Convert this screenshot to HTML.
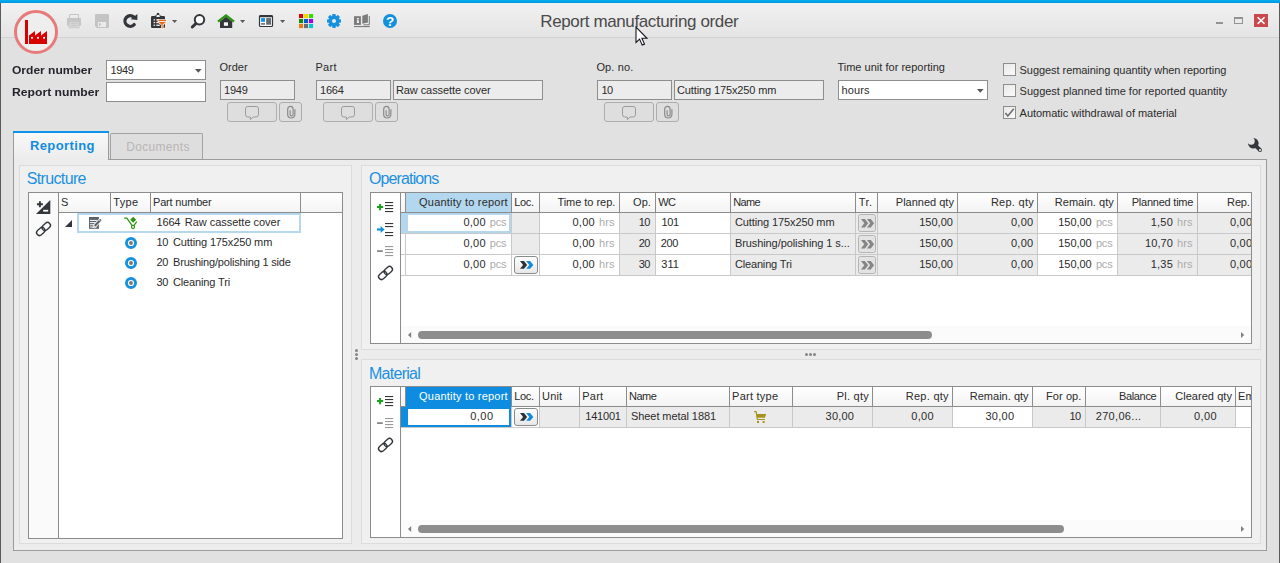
<!DOCTYPE html>
<html lang="en"><head><meta charset="utf-8"><title>Report manufacturing order</title>
<style>
html,body{margin:0;padding:0;}
body{width:1280px;height:563px;overflow:hidden;background:#e1e1e1;position:relative;font-family:"Liberation Sans",sans-serif;font-size:11px;color:#2b2b2b;}
.a{position:absolute;box-sizing:border-box;}
.t{white-space:nowrap;}
svg{overflow:visible;}
</style></head>
<body>
<div class="a " style="left:0px;top:0px;width:1280px;height:3px;background:linear-gradient(#00b0f0,#0095dd);"></div>
<div class="a " style="left:0px;top:3px;width:1280px;height:34px;background:linear-gradient(#f1f1f1,#e4e4e4);"></div>
<div class="a " style="left:0px;top:37px;width:1280px;height:1px;background:#d2d2d2;"></div>
<div class="a " style="left:0px;top:3px;width:1px;height:560px;background:#5a5a5a;"></div>
<div class="a " style="left:1279px;top:3px;width:1px;height:560px;background:#5a5a5a;"></div>
<svg class="a" style="left:13px;top:9px;" width="46" height="46" viewBox="0 0 46 46"><circle cx="23" cy="23" r="20.5" fill="#eeeeee" stroke="#e77b7b" stroke-width="3"/><rect x="12" y="11" width="3" height="24" fill="#d90000"/><path d="M16 35V26.5L22 22v4.5L28 22v4.5L34 22V35z" fill="#d90000"/><rect x="18.1" y="27.9" width="1.8" height="1.8" fill="#fff"/><rect x="24.1" y="27.9" width="1.8" height="1.8" fill="#fff"/><rect x="30.2" y="27.9" width="1.8" height="1.8" fill="#fff"/></svg>
<svg class="a" style="left:0;top:0" width="420" height="40" viewBox="0 0 420 40"><path d="M69.5 18V14.5h9V18" fill="none" stroke="#c6c6c6" stroke-width="1"/><rect x="67" y="18" width="14" height="7.7" rx="0.8" fill="#c6c6c6"/><rect x="69" y="21.8" width="10" height="6.1" fill="#d9d9d9" stroke="#c6c6c6" stroke-width="0.8"/><rect x="70.6" y="23.3" width="6.8" height="0.9" fill="#c2c2c2"/><rect x="70.6" y="25.3" width="6.8" height="0.9" fill="#c2c2c2"/><path d="M96.2 14h11.6a1.2 1.2 0 0 1 1.2 1.2v11.6a1.2 1.2 0 0 1-1.2 1.2H97l-2-2V15.2a1.2 1.2 0 0 1 1.2-1.2z" fill="#c4c4c4"/><rect x="98" y="22" width="8" height="5" fill="#ebebeb"/><rect x="99" y="23.2" width="1.7" height="2.7" fill="#c4c4c4"/><path d="M133.6 16.9A5.3 5.3 0 1 0 134.2 24.6" fill="none" stroke="#33363a" stroke-width="3.3" stroke-linecap="round"/><path d="M137.4 13.9V19.9L130.6 19.3z" fill="#33363a"/><rect x="151" y="16" width="14" height="12" rx="1.2" fill="#33363a"/><path d="M154.8 17v-1.6h1.6L157 13h2l0.6 2.4h1.6V17z" fill="#33363a"/><path d="M156.3 16.9l0.7-2h2.2l0.7 2z" fill="#f2f2f2"/><rect x="153.6" y="19.2" width="1.5" height="1.3" fill="#f2f2f2"/><rect x="156.3" y="19.2" width="3" height="1.3" fill="#f2f2f2"/><rect x="153.6" y="21.9" width="1.5" height="1.3" fill="#f2f2f2"/><rect x="156.3" y="21.9" width="2.2" height="1.3" fill="#f2f2f2"/><rect x="153.6" y="24.6" width="1.5" height="1.3" fill="#f2f2f2"/><rect x="156.3" y="24.6" width="3.5" height="1.3" fill="#f2f2f2"/><path d="M157.6 19.2h9.4v3.2l-3.4 2.6v5l-2.6-1.6v-3.4l-3.4-2.6z" fill="#f2f2f2"/><rect x="158.4" y="19.9" width="7.6" height="1.2" fill="#f26a0e"/><path d="M158.4 22h7.6l-3.3 2.6v4.2l-1.2-1v-3.2z" fill="#f26a0e"/><path d="M172 20h5.2l-2.6 3.1z" fill="#5a5a5a"/><circle cx="199.5" cy="19.7" r="4.7" fill="#fbfbfb" stroke="#33363a" stroke-width="2"/><path d="M195.8 23.6L192.3 27" stroke="#33363a" stroke-width="3" stroke-linecap="round"/><path d="M220 21.4l6-4.6 6.2 4.6V28H220z" fill="#33363a"/><rect x="223.9" y="22.3" width="4.1" height="3.5" fill="#f7f7f7"/><path d="M218 21.6L226 15.4l8 6.2" fill="none" stroke="#2c9412" stroke-width="2.4"/><path d="M240 20h5.2l-2.6 3.1z" fill="#5a5a5a"/><rect x="259.5" y="15.5" width="13" height="11" rx="1" fill="#fafafa" stroke="#33363a" stroke-width="1.2"/><rect x="259.5" y="15.2" width="13" height="2" rx="0.6" fill="#33363a"/><rect x="261.1" y="18.1" width="3.9" height="3.7" fill="#0d92e2"/><rect x="261.1" y="23.1" width="3.9" height="1.6" fill="#666c73"/><rect x="266.2" y="18.1" width="4.8" height="6.6" fill="#666c73"/><path d="M280 20h5.2l-2.6 3.1z" fill="#5a5a5a"/><rect x="299" y="14" width="4.1" height="4.1" fill="#dd0202"/><rect x="304" y="14" width="4.1" height="4.1" fill="#ecd800"/><rect x="309" y="14" width="4.1" height="4.1" fill="#33dd06"/><rect x="299" y="19" width="4.1" height="4.1" fill="#138a08"/><rect x="304" y="19" width="4.1" height="4.1" fill="#0558cd"/><rect x="309" y="19" width="4.1" height="4.1" fill="#9b04ef"/><rect x="299" y="24" width="4.1" height="4.1" fill="#ee7a12"/><rect x="304" y="24" width="4.1" height="4.1" fill="#676d73"/><rect x="309" y="24" width="4.1" height="4.1" fill="#04c6cf"/><rect x="-1.75" y="-7" width="3.5" height="3.6" rx="0.7" transform="translate(334 21) rotate(0)" fill="#1691df"/><rect x="-1.75" y="-7" width="3.5" height="3.6" rx="0.7" transform="translate(334 21) rotate(45)" fill="#1691df"/><rect x="-1.75" y="-7" width="3.5" height="3.6" rx="0.7" transform="translate(334 21) rotate(90)" fill="#1691df"/><rect x="-1.75" y="-7" width="3.5" height="3.6" rx="0.7" transform="translate(334 21) rotate(135)" fill="#1691df"/><rect x="-1.75" y="-7" width="3.5" height="3.6" rx="0.7" transform="translate(334 21) rotate(180)" fill="#1691df"/><rect x="-1.75" y="-7" width="3.5" height="3.6" rx="0.7" transform="translate(334 21) rotate(225)" fill="#1691df"/><rect x="-1.75" y="-7" width="3.5" height="3.6" rx="0.7" transform="translate(334 21) rotate(270)" fill="#1691df"/><rect x="-1.75" y="-7" width="3.5" height="3.6" rx="0.7" transform="translate(334 21) rotate(315)" fill="#1691df"/><circle cx="334" cy="21" r="3.7" fill="none" stroke="#1691df" stroke-width="3.3"/><rect x="354" y="16.2" width="6.9" height="8.7" fill="#7b7b7b"/><rect x="356.9" y="18" width="2" height="1.5" fill="#efefef"/><rect x="356.9" y="20.2" width="2" height="2.8" fill="#efefef"/><path d="M362.3 15.8L367.9 14v8.5l-5.6 1.2z" fill="#7b7b7b"/><path d="M369.3 16v8.8H363.5" fill="none" stroke="#7b7b7b" stroke-width="1"/><rect x="354" y="26" width="15.8" height="1.1" fill="#7b7b7b"/><circle cx="390" cy="21" r="7" fill="#1290dc"/><text x="390" y="25.9" text-anchor="middle" font-family="Liberation Sans,sans-serif" font-weight="bold" font-size="13.5" fill="#fff">?</text></svg>
<span id="t1" class="a t" style="top:11px;font-size:17px;line-height:21px;color:#4a4a4a;letter-spacing:-0.381px;left:639.31px;transform:translateX(-50%);">Report manufacturing order</span>
<svg class="a" style="left:635px;top:26px;" width="13" height="20" viewBox="0 0 13 20"><path d="M1 1v15.5l3.6-3.4 2.6 6 2.3-1-2.6-5.8H12z" fill="#fff" stroke="#15151f" stroke-width="1.1"/></svg>
<div class="a " style="left:1216px;top:22px;width:7px;height:2px;background:#939393;"></div>
<div class="a " style="left:1234px;top:17px;width:9px;height:7px;border:1px solid #939393;border-top-width:2px;"></div>
<div class="a " style="left:1254px;top:14px;width:14px;height:13px;background:#c9484b;"></div>
<svg class="a" style="left:1254px;top:14px;" width="14" height="13" viewBox="0 0 14 13"><path d="M3.6 3.3L10.6 9.9M10.6 3.3L3.6 9.9" stroke="#fff" stroke-width="1.5"/></svg>
<span id="t2" class="a t" style="top:63px;font-size:11px;line-height:14px;color:#25252d;font-weight:bold;left:12.39px;transform:scaleX(1.0934);transform-origin:0 0;">Order number</span>
<span id="t3" class="a t" style="top:85px;font-size:11px;line-height:14px;color:#25252d;font-weight:bold;left:12.39px;transform:scaleX(1.1062);transform-origin:0 0;">Report number</span>
<div class="a " style="left:106px;top:60px;width:100px;height:20px;background:#fff;border:1px solid #8e8e8e;"></div>
<svg class="a" style="left:195.1px;top:68.6px;" width="7" height="4" viewBox="0 0 7 4"><path d="M0 0h6.6L3.3 3.7z" fill="#555"/></svg>
<span id="t4" class="a t" style="top:63px;font-size:11px;line-height:14px;color:#2b2b2b;letter-spacing:-0.323px;left:110.39px;">1949</span>
<div class="a " style="left:106px;top:82px;width:100px;height:20px;background:#fff;border:1px solid #8e8e8e;"></div>
<span id="t5" class="a t" style="top:60px;font-size:11px;line-height:14px;color:#2b2b2b;letter-spacing:0.022px;left:219.40px;">Order</span>
<div class="a " style="left:220px;top:80px;width:75px;height:20px;background:#ececec;border:1px solid #8e8e8e;"></div>
<span id="t6" class="a t" style="top:83px;font-size:11px;line-height:14px;color:#2b2b2b;letter-spacing:-0.190px;left:224.00px;">1949</span>
<div class="a " style="left:227px;top:102px;width:50px;height:20px;background:#dedede;border:1px solid #adadad;border-radius:3px;"></div>
<svg class="a" style="left:245px;top:106px;" width="14" height="14" viewBox="0 0 14 14"><path d="M2.8 0.5h8.4a2.3 2.3 0 0 1 2.3 2.3v5.9a2.3 2.3 0 0 1-2.3 2.3H8.2L5.4 13.6 5.2 11H2.8a2.3 2.3 0 0 1-2.3-2.3V2.8a2.3 2.3 0 0 1 2.3-2.3z" fill="none" stroke="#9b9b9b" stroke-width="1"/></svg>
<div class="a " style="left:279px;top:102px;width:23px;height:20px;background:#dedede;border:1px solid #adadad;border-radius:3px;"></div>
<svg class="a" style="left:286.7px;top:106px;" width="9" height="13" viewBox="0 0 9 13"><path d="M7.9 3.2V8.6A3.6 3.4 0 0 1 0.7 8.6V3.3A2.7 2.9 0 0 1 6.1 3.3V8.4A1.5 1.5 0 0 1 3.1 8.4V4.2" fill="none" stroke="#888" stroke-width="1.15"/></svg>
<span id="t7" class="a t" style="top:60px;font-size:11px;line-height:14px;color:#2b2b2b;letter-spacing:0.340px;left:315.39px;">Part</span>
<div class="a " style="left:316px;top:80px;width:75px;height:20px;background:#ececec;border:1px solid #8e8e8e;"></div>
<span id="t8" class="a t" style="top:83px;font-size:11px;line-height:14px;color:#2b2b2b;letter-spacing:-0.190px;left:320.00px;">1664</span>
<div class="a " style="left:393px;top:80px;width:150px;height:20px;background:#ececec;border:1px solid #8e8e8e;"></div>
<span id="t9" class="a t" style="top:83px;font-size:11px;line-height:14px;color:#2b2b2b;letter-spacing:-0.069px;left:395.89px;">Raw cassette cover</span>
<div class="a " style="left:323px;top:102px;width:50px;height:20px;background:#dedede;border:1px solid #adadad;border-radius:3px;"></div>
<svg class="a" style="left:341px;top:106px;" width="14" height="14" viewBox="0 0 14 14"><path d="M2.8 0.5h8.4a2.3 2.3 0 0 1 2.3 2.3v5.9a2.3 2.3 0 0 1-2.3 2.3H8.2L5.4 13.6 5.2 11H2.8a2.3 2.3 0 0 1-2.3-2.3V2.8a2.3 2.3 0 0 1 2.3-2.3z" fill="none" stroke="#9b9b9b" stroke-width="1"/></svg>
<div class="a " style="left:375px;top:102px;width:23px;height:20px;background:#dedede;border:1px solid #adadad;border-radius:3px;"></div>
<svg class="a" style="left:382.7px;top:106px;" width="9" height="13" viewBox="0 0 9 13"><path d="M7.9 3.2V8.6A3.6 3.4 0 0 1 0.7 8.6V3.3A2.7 2.9 0 0 1 6.1 3.3V8.4A1.5 1.5 0 0 1 3.1 8.4V4.2" fill="none" stroke="#888" stroke-width="1.15"/></svg>
<span id="t10" class="a t" style="top:60px;font-size:11px;line-height:14px;color:#2b2b2b;letter-spacing:0.122px;left:596.39px;">Op. no.</span>
<div class="a " style="left:597px;top:80px;width:75px;height:20px;background:#ececec;border:1px solid #8e8e8e;"></div>
<span id="t11" class="a t" style="top:83px;font-size:11px;line-height:14px;color:#2b2b2b;letter-spacing:-0.530px;left:601.39px;">10</span>
<div class="a " style="left:674px;top:80px;width:150px;height:20px;background:#ececec;border:1px solid #8e8e8e;"></div>
<span id="t12" class="a t" style="top:83px;font-size:11px;line-height:14px;color:#2b2b2b;letter-spacing:-0.118px;left:677.00px;">Cutting 175x250 mm</span>
<div class="a " style="left:604px;top:102px;width:50px;height:20px;background:#dedede;border:1px solid #adadad;border-radius:3px;"></div>
<svg class="a" style="left:622px;top:106px;" width="14" height="14" viewBox="0 0 14 14"><path d="M2.8 0.5h8.4a2.3 2.3 0 0 1 2.3 2.3v5.9a2.3 2.3 0 0 1-2.3 2.3H8.2L5.4 13.6 5.2 11H2.8a2.3 2.3 0 0 1-2.3-2.3V2.8a2.3 2.3 0 0 1 2.3-2.3z" fill="none" stroke="#9b9b9b" stroke-width="1"/></svg>
<div class="a " style="left:656px;top:102px;width:23px;height:20px;background:#dedede;border:1px solid #adadad;border-radius:3px;"></div>
<svg class="a" style="left:663.7px;top:106px;" width="9" height="13" viewBox="0 0 9 13"><path d="M7.9 3.2V8.6A3.6 3.4 0 0 1 0.7 8.6V3.3A2.7 2.9 0 0 1 6.1 3.3V8.4A1.5 1.5 0 0 1 3.1 8.4V4.2" fill="none" stroke="#888" stroke-width="1.15"/></svg>
<span id="t13" class="a t" style="top:60px;font-size:11px;line-height:14px;color:#2b2b2b;letter-spacing:0.019px;left:837.39px;">Time unit for reporting</span>
<div class="a " style="left:838px;top:80px;width:150px;height:20px;background:#fff;border:1px solid #8e8e8e;"></div>
<svg class="a" style="left:977.1px;top:88.6px;" width="7" height="4" viewBox="0 0 7 4"><path d="M0 0h6.6L3.3 3.7z" fill="#555"/></svg>
<span id="t14" class="a t" style="top:83px;font-size:11px;line-height:14px;color:#2b2b2b;letter-spacing:0.173px;left:841.39px;">hours</span>
<div class="a " style="left:1003px;top:63px;width:13px;height:13px;background:linear-gradient(135deg,#e9e9e9,#fafafa);border:1px solid #8e8e8e;"></div>
<span id="t15" class="a t" style="top:63px;font-size:11px;line-height:14px;color:#2b2b2b;letter-spacing:-0.060px;left:1019.60px;">Suggest remaining quantity when reporting</span>
<div class="a " style="left:1003px;top:84px;width:13px;height:13px;background:linear-gradient(135deg,#e9e9e9,#fafafa);border:1px solid #8e8e8e;"></div>
<span id="t16" class="a t" style="top:84px;font-size:11px;line-height:14px;color:#2b2b2b;letter-spacing:-0.010px;left:1019.60px;">Suggest planned time for reported quantity</span>
<div class="a " style="left:1003px;top:106px;width:13px;height:13px;background:linear-gradient(135deg,#e9e9e9,#fafafa);border:1px solid #8e8e8e;"></div>
<svg class="a" style="left:1003px;top:106px;" width="13" height="13" viewBox="0 0 13 13"><path d="M2.4 7L4.8 10L10.8 2.8" fill="none" stroke="#6e6e6e" stroke-width="1.6"/></svg>
<span id="t17" class="a t" style="top:106px;font-size:11px;line-height:14px;color:#2b2b2b;letter-spacing:-0.036px;left:1019.60px;">Automatic withdrawal of material</span>
<svg class="a" style="left:1240px;top:130px" width="30" height="30" viewBox="1240 130 30 30"><defs><mask id="wm"><rect x="1240" y="130" width="30" height="30" fill="#fff"/><circle cx="1251.15" cy="141.15" r="3.55" fill="#000"/></mask></defs><g mask="url(#wm)"><circle cx="1253.3" cy="143.3" r="5.3" fill="#33363a"/></g><path d="M1255.4 145.4L1260.1 150.1" stroke="#33363a" stroke-width="3.7"/><circle cx="1260.1" cy="150.1" r="1.85" fill="#33363a"/><circle cx="1260" cy="150" r="1" fill="#fff"/></svg>
<div class="a " style="left:13px;top:159px;width:1254px;height:392px;background:#ececec;border:1px solid #9c9c9c;"></div>
<div class="a " style="left:13px;top:131px;width:96px;height:29px;background:linear-gradient(#f9f9f9,#ececec);border:1px solid #9a9a9a;border-bottom:none;border-top:none;"></div>
<div class="a " style="left:13px;top:131px;width:96px;height:2px;background:#0f93e6;"></div>
<span id="t18" class="a t" style="top:138px;font-size:13px;line-height:16px;color:#128ce0;font-weight:bold;letter-spacing:0.380px;left:62.39px;transform:translateX(-50%);">Reporting</span>
<div class="a " style="left:110px;top:133px;width:93px;height:26px;background:#dedede;border:1px solid #a2a2a2;border-bottom:none;border-radius:2px 2px 0 0;"></div>
<span id="t19" class="a t" style="top:140px;font-size:12px;line-height:15px;color:#b9b5b5;letter-spacing:0.327px;left:157.96px;transform:translateX(-50%);">Documents</span>
<div class="a " style="left:19px;top:165px;width:333px;height:379px;background:#f0f0f0;border:1px solid #dcdcdc;"></div>
<span id="t20" class="a t" style="top:169px;font-size:16px;line-height:20px;color:#1b90e2;letter-spacing:-0.644px;left:26.72px;">Structure</span>
<div class="a " style="left:361px;top:165px;width:900px;height:185px;background:#f0f0f0;border:1px solid #dcdcdc;"></div>
<span id="t21" class="a t" style="top:169px;font-size:16px;line-height:20px;color:#1b90e2;letter-spacing:-0.879px;left:369.02px;">Operations</span>
<div class="a " style="left:361px;top:359px;width:900px;height:185px;background:#f0f0f0;border:1px solid #dcdcdc;"></div>
<span id="t22" class="a t" style="top:364px;font-size:16px;line-height:20px;color:#1b90e2;letter-spacing:-0.736px;left:369.02px;">Material</span>
<div class="a " style="left:355px;top:349px;width:3px;height:3px;background:#858585;border-radius:1.5px;"></div>
<div class="a " style="left:805px;top:353px;width:3px;height:3px;background:#858585;border-radius:1.5px;"></div>
<div class="a " style="left:355px;top:353px;width:3px;height:3px;background:#858585;border-radius:1.5px;"></div>
<div class="a " style="left:809px;top:353px;width:3px;height:3px;background:#858585;border-radius:1.5px;"></div>
<div class="a " style="left:355px;top:357px;width:3px;height:3px;background:#858585;border-radius:1.5px;"></div>
<div class="a " style="left:813px;top:353px;width:3px;height:3px;background:#858585;border-radius:1.5px;"></div>
<div class="a " style="left:28px;top:192px;width:315px;height:347px;background:#fff;border:1px solid #8c8c8c;"></div>
<div class="a " style="left:29px;top:193px;width:29px;height:345px;background:#fafafa;"></div>
<div class="a " style="left:58px;top:193px;width:1px;height:345px;background:#8c8c8c;"></div>
<div class="a " style="left:59px;top:193px;width:283px;height:19px;background:linear-gradient(#ffffff,#f4f4f4);"></div>
<div class="a " style="left:59px;top:212px;width:283px;height:1px;background:#8c8c8c;"></div>
<div class="a " style="left:110px;top:193px;width:1px;height:19px;background:#8c8c8c;"></div>
<div class="a " style="left:150px;top:193px;width:1px;height:19px;background:#8c8c8c;"></div>
<div class="a " style="left:300px;top:193px;width:1px;height:19px;background:#8c8c8c;"></div>
<span id="t23" class="a t" style="top:195px;font-size:11px;line-height:14px;color:#2b2b2b;left:61.10px;">S</span>
<span id="t24" class="a t" style="top:195px;font-size:11px;line-height:14px;color:#2b2b2b;letter-spacing:0.287px;left:113.30px;">Type</span>
<span id="t25" class="a t" style="top:195px;font-size:11px;line-height:14px;color:#2b2b2b;letter-spacing:-0.182px;left:153.00px;">Part number</span>
<div class="a " style="left:77px;top:213px;width:224px;height:20px;background:#fff;border:2px solid #b5d8ef;"></div>
<svg class="a" style="left:65px;top:220px;" width="7" height="7" viewBox="0 0 7 7"><path d="M7 0V7H0z" fill="#33363a"/></svg>
<svg class="a" style="left:89px;top:217px;" width="13" height="12" viewBox="0 0 13 12"><rect x="0" y="0" width="9.9" height="11.8" fill="#5a6068"/><path d="M0.9 3.4h7M0.9 5.6h5.6M0.9 7.8h4M0.9 10h3.2" stroke="#fff" stroke-width="1"/><path d="M3.6 10.4q2.2 0.9 4.6-0.9" fill="none" stroke="#fff" stroke-width="0.9"/><path d="M11.3 3.1L5.2 9.3" stroke="#fff" stroke-width="3.7"/><path d="M11.9 2.5L5.6 8.9" stroke="#5a6068" stroke-width="2.1"/><path d="M4.1 10.3l0.6-2.2 1.6 1.5z" fill="#fff"/><circle cx="10.9" cy="3.5" r="0.55" fill="#fff"/></svg>
<svg class="a" style="left:124px;top:217px;" width="14" height="12" viewBox="0 0 14 12"><path d="M0.2 1.2h2.6L9 9.6" fill="none" stroke="#2c9412" stroke-width="1.3"/><path d="M12.8 4.6L9 9.6" fill="none" stroke="#2c9412" stroke-width="1.3"/><path d="M9.2 -0.3l3 3-3 3-3-3z" fill="#2c9412"/><circle cx="9" cy="10" r="1.55" fill="#fff" stroke="#2c9412" stroke-width="1.2"/></svg>
<svg class="a" style="left:125px;top:237px;" width="12" height="12" viewBox="0 0 12 12"><circle cx="6" cy="6" r="4.55" fill="#fff" stroke="#1691df" stroke-width="2.9"/><circle cx="6" cy="6" r="1.9" fill="#70757a"/></svg>
<svg class="a" style="left:125px;top:257px;" width="12" height="12" viewBox="0 0 12 12"><circle cx="6" cy="6" r="4.55" fill="#fff" stroke="#1691df" stroke-width="2.9"/><circle cx="6" cy="6" r="1.9" fill="#70757a"/></svg>
<svg class="a" style="left:125px;top:277px;" width="12" height="12" viewBox="0 0 12 12"><circle cx="6" cy="6" r="4.55" fill="#fff" stroke="#1691df" stroke-width="2.9"/><circle cx="6" cy="6" r="1.9" fill="#70757a"/></svg>
<span id="t26" class="a t" style="top:215px;font-size:11px;line-height:14px;color:#2b2b2b;letter-spacing:-0.190px;left:156.59px;">1664</span>
<span id="t27" class="a t" style="top:215px;font-size:11px;line-height:14px;color:#2b2b2b;letter-spacing:-0.028px;left:184.80px;">Raw cassette cover</span>
<span id="t28" class="a t" style="top:235px;font-size:11px;line-height:14px;color:#2b2b2b;letter-spacing:-0.530px;left:156.59px;">10</span>
<span id="t29" class="a t" style="top:235px;font-size:11px;line-height:14px;color:#2b2b2b;letter-spacing:-0.129px;left:173.00px;">Cutting 175x250 mm</span>
<span id="t30" class="a t" style="top:255px;font-size:11px;line-height:14px;color:#2b2b2b;letter-spacing:-0.530px;left:156.59px;">20</span>
<span id="t31" class="a t" style="top:255px;font-size:11px;line-height:14px;color:#2b2b2b;letter-spacing:-0.183px;left:173.00px;">Brushing/polishing 1 side</span>
<span id="t32" class="a t" style="top:275px;font-size:11px;line-height:14px;color:#2b2b2b;letter-spacing:-0.530px;left:156.59px;">30</span>
<span id="t33" class="a t" style="top:275px;font-size:11px;line-height:14px;color:#2b2b2b;letter-spacing:-0.145px;left:173.00px;">Cleaning Tri</span>
<svg class="a" style="left:36px;top:200px;" width="15" height="14" viewBox="0 0 15 14"><path d="M14.3 0V13.9H0z" fill="#33363a"/><rect x="7.2" y="9.8" width="5" height="1.8" fill="#fff"/><path d="M0.9 4.2h6M3.9 1.2v6" stroke="#33363a" stroke-width="1.9"/></svg>
<svg class="a" style="left:35.5px;top:222px;" width="15" height="14" viewBox="0 0 15 14"><g fill="none" stroke="#33363a" stroke-width="1.35" transform="rotate(-42 7.5 7)"><rect x="-0.8" y="4.1" width="9.2" height="5.8" rx="2.9"/><rect x="6.6" y="4.1" width="9.2" height="5.8" rx="2.9"/></g></svg>
<div class="a " style="left:370px;top:192px;width:882px;height:152px;background:#fff;border:1px solid #8c8c8c;"></div>
<div class="a " style="left:400px;top:193px;width:1px;height:150px;background:#8c8c8c;"></div>
<div class="a " style="left:401px;top:193px;width:850px;height:19px;background:linear-gradient(#ffffff,#f3f3f3);"></div>
<div class="a " style="left:401px;top:212px;width:850px;height:1px;background:#8c8c8c;"></div>
<div class="a " style="left:405px;top:193px;width:1px;height:19px;background:#8c8c8c;"></div>
<div class="a " style="left:401px;top:326px;width:850px;height:17px;background:#fbfbfb;"></div>
<div class="a " style="left:418px;top:331px;width:514px;height:8px;background:#8d8d8d;border-radius:4px;"></div>
<svg class="a" style="left:408px;top:332px;" width="3" height="6" viewBox="0 0 3 6"><path d="M3.2 0V6L0 3z" fill="#808080"/></svg>
<svg class="a" style="left:1241px;top:332px;" width="3" height="6" viewBox="0 0 3 6"><path d="M0 0V6L3.2 3z" fill="#808080"/></svg>
<div class="a " style="left:406px;top:193px;width:105px;height:19px;background:#b3d7ee;"></div>
<div class="a " style="left:511px;top:193px;width:1px;height:19px;background:#8c8c8c;"></div>
<span id="t34" class="a t" style="top:195px;font-size:11px;line-height:14px;color:#2b2b2b;letter-spacing:0.206px;right:772.19px;">Quantity to report</span>
<div class="a " style="left:539px;top:193px;width:1px;height:19px;background:#8c8c8c;"></div>
<span id="t35" class="a t" style="top:195px;font-size:11px;line-height:14px;color:#2b2b2b;letter-spacing:-0.297px;left:514.19px;">Loc.</span>
<div class="a " style="left:619px;top:193px;width:1px;height:19px;background:#8c8c8c;"></div>
<span id="t36" class="a t" style="top:195px;font-size:11px;line-height:14px;color:#2b2b2b;letter-spacing:-0.034px;right:664.73px;">Time to rep.</span>
<div class="a " style="left:655px;top:193px;width:1px;height:19px;background:#8c8c8c;"></div>
<span id="t37" class="a t" style="top:195px;font-size:11px;line-height:14px;color:#2b2b2b;letter-spacing:0.090px;right:629.00px;">Op.</span>
<div class="a " style="left:730px;top:193px;width:1px;height:19px;background:#8c8c8c;"></div>
<span id="t38" class="a t" style="top:195px;font-size:11px;line-height:14px;color:#2b2b2b;letter-spacing:-0.600px;left:658.29px;">WC</span>
<div class="a " style="left:855px;top:193px;width:1px;height:19px;background:#8c8c8c;"></div>
<span id="t39" class="a t" style="top:195px;font-size:11px;line-height:14px;color:#2b2b2b;letter-spacing:-0.600px;left:733.19px;">Name</span>
<div class="a " style="left:877px;top:193px;width:1px;height:19px;background:#8c8c8c;"></div>
<span id="t40" class="a t" style="top:195px;font-size:11px;line-height:14px;color:#2b2b2b;letter-spacing:0.485px;left:858.79px;">Tr.</span>
<div class="a " style="left:957px;top:193px;width:1px;height:19px;background:#8c8c8c;"></div>
<span id="t41" class="a t" style="top:195px;font-size:11px;line-height:14px;color:#2b2b2b;right:326.10px;">Planned qty</span>
<div class="a " style="left:1037px;top:193px;width:1px;height:19px;background:#8c8c8c;"></div>
<span id="t42" class="a t" style="top:195px;font-size:11px;line-height:14px;color:#2b2b2b;letter-spacing:0.263px;right:246.03px;">Rep. qty</span>
<div class="a " style="left:1117px;top:193px;width:1px;height:19px;background:#8c8c8c;"></div>
<span id="t43" class="a t" style="top:195px;font-size:11px;line-height:14px;color:#2b2b2b;letter-spacing:0.022px;right:166.27px;">Remain. qty</span>
<div class="a " style="left:1197px;top:193px;width:1px;height:19px;background:#8c8c8c;"></div>
<span id="t44" class="a t" style="top:195px;font-size:11px;line-height:14px;color:#2b2b2b;letter-spacing:-0.228px;right:86.82px;">Planned time</span>
<span id="t45" class="a t" style="top:195px;font-size:11px;line-height:14px;color:#2b2b2b;letter-spacing:-0.143px;right:30.24px;">Rep.</span>
<div class="a " style="left:512px;top:213px;width:27px;height:20px;background:#ebebeb;"></div>
<div class="a " style="left:620px;top:213px;width:35px;height:20px;background:#ebebeb;"></div>
<div class="a " style="left:731px;top:213px;width:124px;height:20px;background:#ebebeb;"></div>
<div class="a " style="left:856px;top:213px;width:21px;height:20px;background:#ebebeb;"></div>
<div class="a " style="left:878px;top:213px;width:79px;height:20px;background:#ebebeb;"></div>
<div class="a " style="left:958px;top:213px;width:79px;height:20px;background:#ebebeb;"></div>
<div class="a " style="left:1118px;top:213px;width:79px;height:20px;background:#ebebeb;"></div>
<div class="a " style="left:1198px;top:213px;width:53px;height:20px;background:#ebebeb;"></div>
<div class="a " style="left:401px;top:233px;width:850px;height:1px;background:#c9c9c9;"></div>
<div class="a " style="left:511px;top:213px;width:1px;height:20px;background:#c9c9c9;"></div>
<div class="a " style="left:539px;top:213px;width:1px;height:20px;background:#c9c9c9;"></div>
<div class="a " style="left:619px;top:213px;width:1px;height:20px;background:#c9c9c9;"></div>
<div class="a " style="left:655px;top:213px;width:1px;height:20px;background:#c9c9c9;"></div>
<div class="a " style="left:730px;top:213px;width:1px;height:20px;background:#c9c9c9;"></div>
<div class="a " style="left:855px;top:213px;width:1px;height:20px;background:#c9c9c9;"></div>
<div class="a " style="left:877px;top:213px;width:1px;height:20px;background:#c9c9c9;"></div>
<div class="a " style="left:957px;top:213px;width:1px;height:20px;background:#c9c9c9;"></div>
<div class="a " style="left:1037px;top:213px;width:1px;height:20px;background:#c9c9c9;"></div>
<div class="a " style="left:1117px;top:213px;width:1px;height:20px;background:#c9c9c9;"></div>
<div class="a " style="left:1197px;top:213px;width:1px;height:20px;background:#c9c9c9;"></div>
<div class="a " style="left:405px;top:213px;width:1px;height:20px;background:#c9c9c9;"></div>
<div class="a " style="left:401px;top:213px;width:5px;height:20px;background:#b3d7ee;"></div>
<div class="a " style="left:406px;top:213px;width:105px;height:20px;background:#fff;border:2px solid #b3d7ee;"></div>
<span id="t46" class="a t" style="top:215px;font-size:11px;line-height:14px;color:#2b2b2b;letter-spacing:0.230px;right:794.26px;">0,00</span>
<span id="t47" class="a t" style="top:215px;font-size:11px;line-height:14px;color:#ababab;letter-spacing:-0.155px;left:489.79px;">pcs</span>
<span id="t48" class="a t" style="top:215px;font-size:11px;line-height:14px;color:#2b2b2b;letter-spacing:0.230px;right:685.16px;">0,00</span>
<span id="t49" class="a t" style="top:215px;font-size:11px;line-height:14px;color:#ababab;letter-spacing:0.160px;left:598.89px;">hrs</span>
<span id="t50" class="a t" style="top:215px;font-size:11px;line-height:14px;color:#2b2b2b;letter-spacing:-0.600px;right:630.20px;">10</span>
<span id="t51" class="a t" style="top:215px;font-size:11px;line-height:14px;color:#2b2b2b;letter-spacing:-0.330px;left:661.39px;">101</span>
<span id="t52" class="a t" style="top:215px;font-size:11px;line-height:14px;color:#2b2b2b;letter-spacing:-0.105px;left:734.89px;">Cutting 175x250 mm</span>
<span id="t53" class="a t" style="top:215px;font-size:11px;line-height:14px;color:#2b2b2b;letter-spacing:0.010px;right:327.09px;">150,00</span>
<span id="t54" class="a t" style="top:215px;font-size:11px;line-height:14px;color:#2b2b2b;letter-spacing:0.230px;right:246.66px;">0,00</span>
<span id="t55" class="a t" style="top:215px;font-size:11px;line-height:14px;color:#2b2b2b;letter-spacing:-0.068px;right:188.46px;">150,00</span>
<span id="t56" class="a t" style="top:215px;font-size:11px;line-height:14px;color:#ababab;letter-spacing:-0.155px;left:1095.89px;">pcs</span>
<span id="t57" class="a t" style="top:215px;font-size:11px;line-height:14px;color:#2b2b2b;letter-spacing:0.230px;right:106.96px;">1,50</span>
<span id="t58" class="a t" style="top:215px;font-size:11px;line-height:14px;color:#ababab;letter-spacing:0.160px;left:1176.89px;">hrs</span>
<div class="a" style="left:1198px;top:213px;width:53px;height:20px;overflow:hidden">
<span id="t59" class="a t" style="top:2px;font-size:11px;line-height:14px;color:#2b2b2b;letter-spacing:0.230px;left:31.99px;">0,00</span>
</div>
<div class="a " style="left:858px;top:214px;width:18px;height:18px;background:#e3e3e3;border:1px solid #b4b4b4;border-radius:2.5px;"></div>
<svg class="a" style="left:860.8px;top:219px;" width="13.2" height="8.4" viewBox="0 0 13.2 8.4"><path d="M0 0h3.9l3.3 4.2-3.3 4.2H0l3.3-4.2z" fill="#868686"/><path d="M5.9 0h3.9l3.3 4.2-3.3 4.2H5.9l3.3-4.2z" fill="#868686"/></svg>
<div class="a " style="left:512px;top:234px;width:27px;height:20px;background:#ebebeb;"></div>
<div class="a " style="left:620px;top:234px;width:35px;height:20px;background:#ebebeb;"></div>
<div class="a " style="left:731px;top:234px;width:124px;height:20px;background:#ebebeb;"></div>
<div class="a " style="left:856px;top:234px;width:21px;height:20px;background:#ebebeb;"></div>
<div class="a " style="left:878px;top:234px;width:79px;height:20px;background:#ebebeb;"></div>
<div class="a " style="left:958px;top:234px;width:79px;height:20px;background:#ebebeb;"></div>
<div class="a " style="left:1118px;top:234px;width:79px;height:20px;background:#ebebeb;"></div>
<div class="a " style="left:1198px;top:234px;width:53px;height:20px;background:#ebebeb;"></div>
<div class="a " style="left:401px;top:254px;width:850px;height:1px;background:#c9c9c9;"></div>
<div class="a " style="left:511px;top:234px;width:1px;height:20px;background:#c9c9c9;"></div>
<div class="a " style="left:539px;top:234px;width:1px;height:20px;background:#c9c9c9;"></div>
<div class="a " style="left:619px;top:234px;width:1px;height:20px;background:#c9c9c9;"></div>
<div class="a " style="left:655px;top:234px;width:1px;height:20px;background:#c9c9c9;"></div>
<div class="a " style="left:730px;top:234px;width:1px;height:20px;background:#c9c9c9;"></div>
<div class="a " style="left:855px;top:234px;width:1px;height:20px;background:#c9c9c9;"></div>
<div class="a " style="left:877px;top:234px;width:1px;height:20px;background:#c9c9c9;"></div>
<div class="a " style="left:957px;top:234px;width:1px;height:20px;background:#c9c9c9;"></div>
<div class="a " style="left:1037px;top:234px;width:1px;height:20px;background:#c9c9c9;"></div>
<div class="a " style="left:1117px;top:234px;width:1px;height:20px;background:#c9c9c9;"></div>
<div class="a " style="left:1197px;top:234px;width:1px;height:20px;background:#c9c9c9;"></div>
<div class="a " style="left:405px;top:234px;width:1px;height:20px;background:#c9c9c9;"></div>
<span id="t60" class="a t" style="top:236px;font-size:11px;line-height:14px;color:#2b2b2b;letter-spacing:0.230px;right:794.26px;">0,00</span>
<span id="t61" class="a t" style="top:236px;font-size:11px;line-height:14px;color:#ababab;letter-spacing:-0.155px;left:489.79px;">pcs</span>
<span id="t62" class="a t" style="top:236px;font-size:11px;line-height:14px;color:#2b2b2b;letter-spacing:0.230px;right:685.16px;">0,00</span>
<span id="t63" class="a t" style="top:236px;font-size:11px;line-height:14px;color:#ababab;letter-spacing:0.160px;left:598.89px;">hrs</span>
<span id="t64" class="a t" style="top:236px;font-size:11px;line-height:14px;color:#2b2b2b;letter-spacing:-0.600px;right:630.20px;">20</span>
<span id="t65" class="a t" style="top:236px;font-size:11px;line-height:14px;color:#2b2b2b;letter-spacing:-0.330px;left:660.69px;">200</span>
<span id="t66" class="a t" style="top:236px;font-size:11px;line-height:14px;color:#2b2b2b;letter-spacing:-0.079px;left:734.89px;">Brushing/polishing 1 s...</span>
<span id="t67" class="a t" style="top:236px;font-size:11px;line-height:14px;color:#2b2b2b;letter-spacing:0.010px;right:327.09px;">150,00</span>
<span id="t68" class="a t" style="top:236px;font-size:11px;line-height:14px;color:#2b2b2b;letter-spacing:0.230px;right:246.66px;">0,00</span>
<span id="t69" class="a t" style="top:236px;font-size:11px;line-height:14px;color:#2b2b2b;letter-spacing:-0.068px;right:188.46px;">150,00</span>
<span id="t70" class="a t" style="top:236px;font-size:11px;line-height:14px;color:#ababab;letter-spacing:-0.155px;left:1095.89px;">pcs</span>
<span id="t71" class="a t" style="top:236px;font-size:11px;line-height:14px;color:#2b2b2b;letter-spacing:0.043px;right:107.15px;">10,70</span>
<span id="t72" class="a t" style="top:236px;font-size:11px;line-height:14px;color:#ababab;letter-spacing:0.160px;left:1176.89px;">hrs</span>
<div class="a" style="left:1198px;top:234px;width:53px;height:20px;overflow:hidden">
<span id="t73" class="a t" style="top:2px;font-size:11px;line-height:14px;color:#2b2b2b;letter-spacing:0.230px;left:31.99px;">0,00</span>
</div>
<div class="a " style="left:858px;top:235px;width:18px;height:18px;background:#e3e3e3;border:1px solid #b4b4b4;border-radius:2.5px;"></div>
<svg class="a" style="left:860.8px;top:240px;" width="13.2" height="8.4" viewBox="0 0 13.2 8.4"><path d="M0 0h3.9l3.3 4.2-3.3 4.2H0l3.3-4.2z" fill="#868686"/><path d="M5.9 0h3.9l3.3 4.2-3.3 4.2H5.9l3.3-4.2z" fill="#868686"/></svg>
<div class="a " style="left:512px;top:255px;width:27px;height:20px;background:#ebebeb;"></div>
<div class="a " style="left:620px;top:255px;width:35px;height:20px;background:#ebebeb;"></div>
<div class="a " style="left:731px;top:255px;width:124px;height:20px;background:#ebebeb;"></div>
<div class="a " style="left:856px;top:255px;width:21px;height:20px;background:#ebebeb;"></div>
<div class="a " style="left:878px;top:255px;width:79px;height:20px;background:#ebebeb;"></div>
<div class="a " style="left:958px;top:255px;width:79px;height:20px;background:#ebebeb;"></div>
<div class="a " style="left:1118px;top:255px;width:79px;height:20px;background:#ebebeb;"></div>
<div class="a " style="left:1198px;top:255px;width:53px;height:20px;background:#ebebeb;"></div>
<div class="a " style="left:401px;top:275px;width:850px;height:1px;background:#c9c9c9;"></div>
<div class="a " style="left:511px;top:255px;width:1px;height:20px;background:#c9c9c9;"></div>
<div class="a " style="left:539px;top:255px;width:1px;height:20px;background:#c9c9c9;"></div>
<div class="a " style="left:619px;top:255px;width:1px;height:20px;background:#c9c9c9;"></div>
<div class="a " style="left:655px;top:255px;width:1px;height:20px;background:#c9c9c9;"></div>
<div class="a " style="left:730px;top:255px;width:1px;height:20px;background:#c9c9c9;"></div>
<div class="a " style="left:855px;top:255px;width:1px;height:20px;background:#c9c9c9;"></div>
<div class="a " style="left:877px;top:255px;width:1px;height:20px;background:#c9c9c9;"></div>
<div class="a " style="left:957px;top:255px;width:1px;height:20px;background:#c9c9c9;"></div>
<div class="a " style="left:1037px;top:255px;width:1px;height:20px;background:#c9c9c9;"></div>
<div class="a " style="left:1117px;top:255px;width:1px;height:20px;background:#c9c9c9;"></div>
<div class="a " style="left:1197px;top:255px;width:1px;height:20px;background:#c9c9c9;"></div>
<div class="a " style="left:405px;top:255px;width:1px;height:20px;background:#c9c9c9;"></div>
<span id="t74" class="a t" style="top:257px;font-size:11px;line-height:14px;color:#2b2b2b;letter-spacing:0.230px;right:794.26px;">0,00</span>
<span id="t75" class="a t" style="top:257px;font-size:11px;line-height:14px;color:#ababab;letter-spacing:-0.155px;left:489.79px;">pcs</span>
<span id="t76" class="a t" style="top:257px;font-size:11px;line-height:14px;color:#2b2b2b;letter-spacing:0.230px;right:685.16px;">0,00</span>
<span id="t77" class="a t" style="top:257px;font-size:11px;line-height:14px;color:#ababab;letter-spacing:0.160px;left:598.89px;">hrs</span>
<span id="t78" class="a t" style="top:257px;font-size:11px;line-height:14px;color:#2b2b2b;letter-spacing:-0.600px;right:630.20px;">30</span>
<span id="t79" class="a t" style="top:257px;font-size:11px;line-height:14px;color:#2b2b2b;letter-spacing:0.085px;left:661.19px;">311</span>
<span id="t80" class="a t" style="top:257px;font-size:11px;line-height:14px;color:#2b2b2b;letter-spacing:-0.155px;left:734.89px;">Cleaning Tri</span>
<span id="t81" class="a t" style="top:257px;font-size:11px;line-height:14px;color:#2b2b2b;letter-spacing:0.010px;right:327.09px;">150,00</span>
<span id="t82" class="a t" style="top:257px;font-size:11px;line-height:14px;color:#2b2b2b;letter-spacing:0.230px;right:246.66px;">0,00</span>
<span id="t83" class="a t" style="top:257px;font-size:11px;line-height:14px;color:#2b2b2b;letter-spacing:-0.068px;right:188.46px;">150,00</span>
<span id="t84" class="a t" style="top:257px;font-size:11px;line-height:14px;color:#ababab;letter-spacing:-0.155px;left:1095.89px;">pcs</span>
<span id="t85" class="a t" style="top:257px;font-size:11px;line-height:14px;color:#2b2b2b;letter-spacing:0.230px;right:106.96px;">1,35</span>
<span id="t86" class="a t" style="top:257px;font-size:11px;line-height:14px;color:#ababab;letter-spacing:0.160px;left:1176.89px;">hrs</span>
<div class="a" style="left:1198px;top:255px;width:53px;height:20px;overflow:hidden">
<span id="t87" class="a t" style="top:2px;font-size:11px;line-height:14px;color:#2b2b2b;letter-spacing:0.230px;left:31.99px;">0,00</span>
</div>
<div class="a " style="left:858px;top:256px;width:18px;height:18px;background:#e3e3e3;border:1px solid #b4b4b4;border-radius:2.5px;"></div>
<svg class="a" style="left:860.8px;top:261px;" width="13.2" height="8.4" viewBox="0 0 13.2 8.4"><path d="M0 0h3.9l3.3 4.2-3.3 4.2H0l3.3-4.2z" fill="#868686"/><path d="M5.9 0h3.9l3.3 4.2-3.3 4.2H5.9l3.3-4.2z" fill="#868686"/></svg>
<div class="a " style="left:512px;top:255px;width:27px;height:20px;background:#fff;"></div>
<div class="a " style="left:514px;top:256px;width:24px;height:18px;background:linear-gradient(#fdfdfd,#e8e8e8);border:1px solid #8a8a8a;border-radius:3px;"></div>
<svg class="a" style="left:519.9px;top:261.1px;" width="14" height="8" viewBox="0 0 14 8"><path d="M0 0h4l3.1 3.9-3.1 3.9H0l3.1-3.9z" fill="#2d3136"/><path d="M6.2 0h4l3.1 3.9-3.1 3.9H6.2l3.1-3.9z" fill="#0e8de0"/></svg>
<svg class="a" style="left:377px;top:202px;" width="17" height="14" viewBox="0 0 17 14"><rect x="8" y="0" width="8.2" height="1.1" fill="#33363a"/><rect x="8" y="3" width="8.2" height="1.1" fill="#33363a"/><rect x="8" y="6" width="8.2" height="1.1" fill="#33363a"/><rect x="8" y="9" width="8.2" height="1.1" fill="#33363a"/><path d="M0 5.1h6.2M3.1 2v6.2" stroke="#1aa21a" stroke-width="2"/></svg>
<svg class="a" style="left:377px;top:223px;" width="17" height="14" viewBox="0 0 17 14"><rect x="8" y="0" width="8.2" height="1.1" fill="#33363a"/><rect x="8" y="3" width="8.2" height="1.1" fill="#33363a"/><rect x="8" y="9" width="8.2" height="1.1" fill="#33363a"/><rect x="8" y="12" width="8.2" height="1.1" fill="#33363a"/><path d="M0 6.5h4" stroke="#1691df" stroke-width="2.2"/><path d="M3.6 3.1L7.6 6.5 3.6 9.9z" fill="#1691df"/></svg>
<svg class="a" style="left:377px;top:246px;" width="17" height="14" viewBox="0 0 17 14"><rect x="8" y="0" width="8.2" height="1.1" fill="#9a9a9a"/><rect x="8" y="3" width="8.2" height="1.1" fill="#9a9a9a"/><rect x="8" y="6" width="8.2" height="1.1" fill="#9a9a9a"/><rect x="8" y="9" width="8.2" height="1.1" fill="#9a9a9a"/><path d="M0 5.1h5.8" stroke="#8a8a8a" stroke-width="1.8"/></svg>
<svg class="a" style="left:377.5px;top:265.5px;" width="15" height="14" viewBox="0 0 15 14"><g fill="none" stroke="#33363a" stroke-width="1.35" transform="rotate(-42 7.5 7)"><rect x="-0.8" y="4.1" width="9.2" height="5.8" rx="2.9"/><rect x="6.6" y="4.1" width="9.2" height="5.8" rx="2.9"/></g></svg>
<div class="a " style="left:370px;top:386px;width:882px;height:152px;background:#fff;border:1px solid #8c8c8c;"></div>
<div class="a " style="left:400px;top:387px;width:1px;height:150px;background:#8c8c8c;"></div>
<div class="a " style="left:401px;top:387px;width:850px;height:19px;background:linear-gradient(#ffffff,#f3f3f3);"></div>
<div class="a " style="left:401px;top:406px;width:850px;height:1px;background:#8c8c8c;"></div>
<div class="a " style="left:405px;top:387px;width:1px;height:19px;background:#8c8c8c;"></div>
<div class="a " style="left:401px;top:520px;width:850px;height:17px;background:#fbfbfb;"></div>
<div class="a " style="left:418px;top:525px;width:646px;height:8px;background:#8d8d8d;border-radius:4px;"></div>
<svg class="a" style="left:408px;top:526px;" width="3" height="6" viewBox="0 0 3 6"><path d="M3.2 0V6L0 3z" fill="#808080"/></svg>
<svg class="a" style="left:1241px;top:526px;" width="3" height="6" viewBox="0 0 3 6"><path d="M0 0V6L3.2 3z" fill="#808080"/></svg>
<div class="a " style="left:406px;top:387px;width:105px;height:20px;background:#0e8de0;"></div>
<div class="a " style="left:511px;top:387px;width:1px;height:19px;background:#8c8c8c;"></div>
<span id="t88" class="a t" style="top:389px;font-size:11px;line-height:14px;color:#fff;letter-spacing:0.206px;right:772.19px;">Quantity to report</span>
<div class="a " style="left:539px;top:387px;width:1px;height:19px;background:#8c8c8c;"></div>
<span id="t89" class="a t" style="top:389px;font-size:11px;line-height:14px;color:#2b2b2b;letter-spacing:-0.297px;left:514.19px;">Loc.</span>
<div class="a " style="left:579px;top:387px;width:1px;height:19px;background:#8c8c8c;"></div>
<span id="t90" class="a t" style="top:389px;font-size:11px;line-height:14px;color:#2b2b2b;letter-spacing:0.183px;left:542.00px;">Unit</span>
<div class="a " style="left:626px;top:387px;width:1px;height:19px;background:#8c8c8c;"></div>
<span id="t91" class="a t" style="top:389px;font-size:11px;line-height:14px;color:#2b2b2b;letter-spacing:0.243px;left:582.19px;">Part</span>
<div class="a " style="left:729px;top:387px;width:1px;height:19px;background:#8c8c8c;"></div>
<span id="t92" class="a t" style="top:389px;font-size:11px;line-height:14px;color:#2b2b2b;letter-spacing:-0.543px;left:629.10px;">Name</span>
<div class="a " style="left:792px;top:387px;width:1px;height:19px;background:#8c8c8c;"></div>
<span id="t93" class="a t" style="top:389px;font-size:11px;line-height:14px;color:#2b2b2b;letter-spacing:0.235px;left:732.10px;">Part type</span>
<div class="a " style="left:872px;top:387px;width:1px;height:19px;background:#8c8c8c;"></div>
<span id="t94" class="a t" style="top:389px;font-size:11px;line-height:14px;color:#2b2b2b;letter-spacing:0.257px;right:410.94px;">Pl. qty</span>
<div class="a " style="left:952px;top:387px;width:1px;height:19px;background:#8c8c8c;"></div>
<span id="t95" class="a t" style="top:389px;font-size:11px;line-height:14px;color:#2b2b2b;letter-spacing:0.277px;right:331.12px;">Rep. qty</span>
<div class="a " style="left:1032px;top:387px;width:1px;height:19px;background:#8c8c8c;"></div>
<span id="t96" class="a t" style="top:389px;font-size:11px;line-height:14px;color:#2b2b2b;letter-spacing:0.022px;right:251.37px;">Remain. qty</span>
<div class="a " style="left:1085px;top:387px;width:1px;height:19px;background:#8c8c8c;"></div>
<span id="t97" class="a t" style="top:389px;font-size:11px;line-height:14px;color:#2b2b2b;letter-spacing:0.110px;right:198.49px;">For op.</span>
<div class="a " style="left:1160px;top:387px;width:1px;height:19px;background:#8c8c8c;"></div>
<span id="t98" class="a t" style="top:389px;font-size:11px;line-height:14px;color:#2b2b2b;letter-spacing:-0.325px;right:123.62px;">Balance</span>
<div class="a " style="left:1235px;top:387px;width:1px;height:19px;background:#8c8c8c;"></div>
<span id="t99" class="a t" style="top:389px;font-size:11px;line-height:14px;color:#2b2b2b;letter-spacing:0.044px;right:48.05px;">Cleared qty</span>
<div class="a" style="left:1236px;top:387px;width:15px;height:19px;overflow:hidden">
<span id="t100" class="a t" style="top:2px;font-size:11px;line-height:14px;color:#2b2b2b;left:2.10px;">Em</span>
</div>
<div class="a " style="left:512px;top:407px;width:27px;height:20px;background:#ebebeb;"></div>
<div class="a " style="left:540px;top:407px;width:39px;height:20px;background:#ebebeb;"></div>
<div class="a " style="left:580px;top:407px;width:46px;height:20px;background:#ebebeb;"></div>
<div class="a " style="left:627px;top:407px;width:102px;height:20px;background:#ebebeb;"></div>
<div class="a " style="left:730px;top:407px;width:62px;height:20px;background:#ebebeb;"></div>
<div class="a " style="left:793px;top:407px;width:79px;height:20px;background:#ebebeb;"></div>
<div class="a " style="left:873px;top:407px;width:79px;height:20px;background:#ebebeb;"></div>
<div class="a " style="left:1033px;top:407px;width:52px;height:20px;background:#ebebeb;"></div>
<div class="a " style="left:1086px;top:407px;width:74px;height:20px;background:#ebebeb;"></div>
<div class="a " style="left:1161px;top:407px;width:74px;height:20px;background:#ebebeb;"></div>
<div class="a " style="left:401px;top:427px;width:850px;height:1px;background:#c9c9c9;"></div>
<div class="a " style="left:511px;top:407px;width:1px;height:20px;background:#c9c9c9;"></div>
<div class="a " style="left:539px;top:407px;width:1px;height:20px;background:#c9c9c9;"></div>
<div class="a " style="left:579px;top:407px;width:1px;height:20px;background:#c9c9c9;"></div>
<div class="a " style="left:626px;top:407px;width:1px;height:20px;background:#c9c9c9;"></div>
<div class="a " style="left:729px;top:407px;width:1px;height:20px;background:#c9c9c9;"></div>
<div class="a " style="left:792px;top:407px;width:1px;height:20px;background:#c9c9c9;"></div>
<div class="a " style="left:872px;top:407px;width:1px;height:20px;background:#c9c9c9;"></div>
<div class="a " style="left:952px;top:407px;width:1px;height:20px;background:#c9c9c9;"></div>
<div class="a " style="left:1032px;top:407px;width:1px;height:20px;background:#c9c9c9;"></div>
<div class="a " style="left:1085px;top:407px;width:1px;height:20px;background:#c9c9c9;"></div>
<div class="a " style="left:1160px;top:407px;width:1px;height:20px;background:#c9c9c9;"></div>
<div class="a " style="left:1235px;top:407px;width:1px;height:20px;background:#c9c9c9;"></div>
<div class="a " style="left:401px;top:407px;width:5px;height:20px;background:#0e8de0;"></div>
<div class="a " style="left:406px;top:407px;width:105px;height:20px;background:#fff;border:2px solid #0e8de0;"></div>
<div class="a " style="left:512px;top:407px;width:27px;height:20px;background:#fff;"></div>
<span id="t101" class="a t" style="top:409px;font-size:11px;line-height:14px;color:#2b2b2b;letter-spacing:0.430px;right:786.57px;">0,00</span>
<div class="a " style="left:514px;top:408px;width:24px;height:18px;background:linear-gradient(#fdfdfd,#e8e8e8);border:1px solid #8a8a8a;border-radius:3px;"></div>
<svg class="a" style="left:519.9px;top:413.1px;" width="14" height="8" viewBox="0 0 14 8"><path d="M0 0h4l3.1 3.9-3.1 3.9H0l3.1-3.9z" fill="#2d3136"/><path d="M6.2 0h4l3.1 3.9-3.1 3.9H6.2l3.1-3.9z" fill="#0e8de0"/></svg>
<span id="t102" class="a t" style="top:409px;font-size:11px;line-height:14px;color:#2b2b2b;letter-spacing:-0.200px;left:585.29px;">141001</span>
<span id="t103" class="a t" style="top:409px;font-size:11px;line-height:14px;color:#2b2b2b;letter-spacing:-0.075px;left:631.00px;">Sheet metal 1881</span>
<span id="t104" class="a t" style="top:409px;font-size:11px;line-height:14px;color:#2b2b2b;letter-spacing:0.168px;right:426.03px;">30,00</span>
<span id="t105" class="a t" style="top:409px;font-size:11px;line-height:14px;color:#2b2b2b;letter-spacing:0.363px;right:345.93px;">0,00</span>
<span id="t106" class="a t" style="top:409px;font-size:11px;line-height:14px;color:#2b2b2b;letter-spacing:0.243px;right:265.75px;">30,00</span>
<span id="t107" class="a t" style="top:409px;font-size:11px;line-height:14px;color:#2b2b2b;letter-spacing:-0.600px;right:199.59px;">10</span>
<span id="t108" class="a t" style="top:409px;font-size:11px;line-height:14px;color:#2b2b2b;letter-spacing:0.323px;left:1095.69px;">270,06...</span>
<span id="t109" class="a t" style="top:409px;font-size:11px;line-height:14px;color:#2b2b2b;letter-spacing:0.363px;right:63.03px;">0,00</span>
<svg class="a" style="left:754px;top:411px;" width="12" height="12" viewBox="0 0 12 12"><path d="M0.2 0.6h1.9l1.3 7.9h7.6" fill="none" stroke="#a7931b" stroke-width="1.2"/><path d="M2.4 2.9h9.8l-1.3 3.9H3z" fill="#a7931b"/><rect x="3" y="10" width="2" height="2" fill="#a7931b"/><rect x="8.6" y="10" width="2" height="2" fill="#a7931b"/></svg>
<svg class="a" style="left:377px;top:396px;" width="17" height="14" viewBox="0 0 17 14"><rect x="8" y="0" width="8.2" height="1.1" fill="#33363a"/><rect x="8" y="3" width="8.2" height="1.1" fill="#33363a"/><rect x="8" y="6" width="8.2" height="1.1" fill="#33363a"/><rect x="8" y="9" width="8.2" height="1.1" fill="#33363a"/><path d="M0 5.1h6.2M3.1 2v6.2" stroke="#1aa21a" stroke-width="2"/></svg>
<svg class="a" style="left:377px;top:418px;" width="17" height="14" viewBox="0 0 17 14"><rect x="8" y="0" width="8.2" height="1.1" fill="#9a9a9a"/><rect x="8" y="3" width="8.2" height="1.1" fill="#9a9a9a"/><rect x="8" y="6" width="8.2" height="1.1" fill="#9a9a9a"/><rect x="8" y="9" width="8.2" height="1.1" fill="#9a9a9a"/><path d="M0 5.1h5.8" stroke="#8a8a8a" stroke-width="1.8"/></svg>
<svg class="a" style="left:377.5px;top:437.5px;" width="15" height="14" viewBox="0 0 15 14"><g fill="none" stroke="#33363a" stroke-width="1.35" transform="rotate(-42 7.5 7)"><rect x="-0.8" y="4.1" width="9.2" height="5.8" rx="2.9"/><rect x="6.6" y="4.1" width="9.2" height="5.8" rx="2.9"/></g></svg>
</body></html>
